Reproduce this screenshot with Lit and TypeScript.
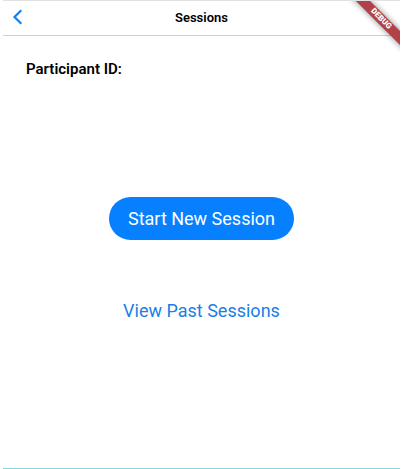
import { LitElement, html, css } from "lit";
import { customElement } from "lit/decorators.js";

@customElement("app-root")
export class AppRoot extends LitElement {
  static styles = css`
    :host {
      display: block;
      box-sizing: border-box;
      min-height: 100vh;
      padding: 0 2px 0 3px;
      background: #fff;
      color: #000;
      font-family: Roboto, "Liberation Sans", sans-serif;
    }
    * {
      box-sizing: border-box;
    }
    .screen {
      position: relative;
      display: flex;
      flex-direction: column;
      min-height: 100vh;
      overflow: hidden;
      border-top: 1px solid #e2e0e2;
      border-bottom: 1px solid #80d8dc;
    }
    .bar {
      display: grid;
      grid-template-columns: 48px 1fr 48px;
      align-items: center;
      height: 35px;
      border-bottom: 1px solid #d0d0d0;
    }
    button {
      margin: 0;
      padding: 0;
      border: 0;
      background: none;
      font: inherit;
      cursor: pointer;
    }
    .back {
      display: flex;
      align-items: center;
      height: 32px;
      align-self: start;
      padding-left: 8px;
    }
    .title {
      margin: 0;
      text-align: center;
      font-size: 13px;
      line-height: 16px;
      font-weight: 600;
    }
    .participant {
      margin: 24px 23px 0;
      font-size: 15px;
      line-height: 18px;
      font-weight: 600;
    }
    .actions {
      display: flex;
      flex-direction: column;
      align-items: center;
      gap: 49px;
      padding-top: 119px;
    }
    .action {
      height: 43px;
      padding: 0 19px;
      border-radius: 22px;
      font-size: 18px;
      line-height: 24px;
    }
    .filled {
      background: #0780ff;
      color: #fff;
    }
    .plain {
      color: #1a80e6;
    }
    .corner {
      position: absolute;
      top: 0;
      right: 0;
      width: 60px;
      height: 60px;
      overflow: hidden;
      pointer-events: none;
    }
    .ribbon {
      position: absolute;
      top: 13px;
      right: -31px;
      width: 100px;
      height: 10px;
      background: #af4248;
      box-shadow: 0 0 6px rgba(0, 0, 0, 0.45);
      color: #fff;
      font-size: 8px;
      line-height: 10px;
      font-weight: 900;
      text-align: center;
      transform: rotate(45deg);
    }
  `;

  render() {
    return html`
      <div class="screen">
        <header class="bar">
          <button class="back" aria-label="Back">
            <svg width="14" height="18" viewBox="0 0 14 18" fill="none" aria-hidden="true">
              <path d="M10.3 2.3 L3.5 9 L10.3 15.7" stroke="#1480f0" stroke-width="2.2" />
            </svg>
          </button>
          <h1 class="title">Sessions</h1>
        </header>
        <main>
          <p class="participant">Participant ID:</p>
          <div class="actions">
            <button class="action filled">Start New Session</button>
            <button class="action plain">View Past Sessions</button>
          </div>
        </main>
        <div class="corner"><div class="ribbon">DEBUG</div></div>
      </div>
    `;
  }
}
